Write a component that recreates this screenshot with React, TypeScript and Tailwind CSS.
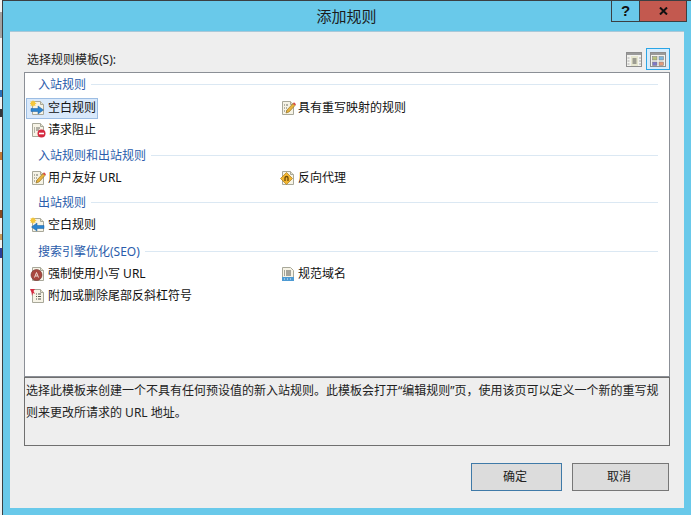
import type { ReactNode } from 'react';

function Page({ children }: { children?: ReactNode }) {
  return (
    <>
      <path d="M2.500 1.500h8l3 3v10h-11z" fill="#f6f3e6" stroke="#a8a89a" />
      <path d="M10.500 1.500v3h3" fill="#e4e0cc" stroke="#a8a89a" />
      {children}
    </>
  );
}

const star = 'M3 0l.8 1.600L5.500 1 5 2.700l1.700.8L5 4.300l.5 1.700-1.700-.6L3 7l-.8-1.600L.5 6 1 4.300-.7 3.500 1 2.700.5 1l1.700.6z';

function Icon({ name }: { name: string }) {
  return (
    <svg width="16" height="16" viewBox="0 0 16 16" className="shrink-0">
      {name === 'blankIn' && (
        <Page>
          <path d={star} fill="#f5c73a" />
          <path d="M1 8.500h7V6l5.500 4L8 14v-2.500H1z" fill="#2b84cf" stroke="#1d5f9f" strokeWidth="0.5" />
        </Page>
      )}
      {name === 'blankOut' && (
        <Page>
          <path d={star} fill="#f5c73a" />
          <path d="M14 8.500H7V6l-5.500 4L7 14v-2.500h7z" fill="#2b84cf" stroke="#1d5f9f" strokeWidth="0.5" />
        </Page>
      )}
      {name === 'block' && (
        <Page>
          <path d="M4 6h1M6 6h4M4 8h1M6 8h3M4 10h1" stroke="#6f6f66" />
          <circle cx="11.500" cy="11.500" r="4" fill="#d5293f" />
          <path d="M9 11.500h5" stroke="#fff" strokeWidth="1.600" />
        </Page>
      )}
      {name === 'edit' && (
        <Page>
          <path d="M4 5h1M4 8h1M4 11h1M6 5h2M6 8h1M6 11h2" stroke="#6f6f66" />
          <path d="M6 13l1-3 6-6.500 2 2-6 6.500z" fill="#e9b43c" stroke="#8a6a1e" strokeWidth="0.6" />
          <path d="M13 3.500l2 2 1-1.200-2-2z" fill="#d8433c" />
        </Page>
      )}
      {name === 'proxy' && (
        <Page>
          <path d="M6.500 2.500l6 6-6 6-6-6z" fill="#f2b632" stroke="#b07c14" strokeWidth="0.7" />
          <path d="M5 11V8a1.500 1.500 0 0 1 3 0v3" fill="none" stroke="#6d4a08" strokeWidth="1.300" />
        </Page>
      )}
      {name === 'lower' && (
        <Page>
          <circle cx="6.500" cy="9" r="5.500" fill="#a8473f" stroke="#6e2f2a" strokeWidth="0.6" />
          <path d="M4.500 11.500l2-5 2 5M5.500 10h2" fill="none" stroke="#efdcd4" />
        </Page>
      )}
      {name === 'domain' && (
        <>
          <path d="M2.500 1.500h8l3 3v10h-11z" fill="#f6f3e6" stroke="#a8a89a" />
          <path d="M4 5h1M6 5h5M4 7h1M6 7h5M4 9h1M6 9h5" stroke="#55554e" />
          <path d="M2 11h12v4H2z" fill="#4d9ad3" />
          <path d="M4 13h1M7 13h1M10 13h1" stroke="#dcefff" />
        </>
      )}
      {name === 'slash' && (
        <Page>
          <path d="M6 6h1M8 6h3M6 8.500h1M8 8.500h3M6 11h1M8 11h3" stroke="#55554e" />
          <path d="M0 1h5L3.500 3 5 6 3 5 2 8 1.500 4.500z" fill="#d5293f" />
        </Page>
      )}
    </svg>
  );
}

function Section({ title, className = '' }: { title: string; className?: string }) {
  return (
    <div className={`flex h-[24px] items-center pl-[13px] pr-[11px] ${className}`}>
      <span className="mr-[5px] shrink-0 pt-[2px] text-[12px] text-[#2a5cab]">{title}</span>
      <div className="h-[1px] flex-1 bg-[#dbe8f3]" />
    </div>
  );
}

function Rule({ icon, label, selected }: { icon: string; label: string; selected?: boolean }) {
  return (
    <div
      className={`flex h-[21px] w-fit items-center gap-[2px] border pl-[3px] pr-[1px] text-[12px] text-[#111] ${
        selected ? 'border-[#9cbde3] bg-[#d9e9fb]' : 'border-transparent'
      }`}
    >
      <Icon name={icon} />
      <span>{label}</span>
    </div>
  );
}

function RuleRow({ children }: { children: ReactNode }) {
  return <div className="grid h-[22px] grid-cols-[250px_1fr] items-center pl-[1px]">{children}</div>;
}

function ListIcon() {
  return (
    <svg width="16" height="15" viewBox="0 0 16 15">
      <rect x="0.500" y="0.500" width="15" height="14" fill="#f3f3ef" stroke="#8e8e8e" />
      <rect x="1" y="1" width="14" height="2" fill="#9a9a9a" />
      <rect x="5" y="4" width="7" height="10" fill="#e6e6cf" />
      <path d="M6.500 7h4M6.500 9h4M6.500 11h4" stroke="#555" />
      <path d="M1.500 6h2M1.500 9h2M1.500 12h2M13 6h2M13 9h2M13 12h2" stroke="#aaa" />
    </svg>
  );
}

function TilesIcon() {
  return (
    <svg width="16" height="15" viewBox="0 0 16 15">
      <rect x="0.500" y="0.500" width="15" height="14" fill="#f3f3ef" stroke="#8e8e8e" />
      <rect x="1" y="1" width="14" height="2" fill="#9a9a9a" />
      <rect x="2.500" y="4.500" width="4.500" height="3.500" fill="#b7c27c" stroke="#7b7b7b" strokeWidth="0.500" />
      <rect x="9" y="4.500" width="4.500" height="3.500" fill="#7db7de" stroke="#7b7b7b" strokeWidth="0.500" />
      <rect x="2.500" y="10" width="4.500" height="3.500" fill="#7f78c8" stroke="#7b7b7b" strokeWidth="0.500" />
      <rect x="9" y="10" width="4.500" height="3.500" fill="#e39a7c" stroke="#7b7b7b" strokeWidth="0.500" />
    </svg>
  );
}

export default function App() {
  return (
    <div className="flex h-[515px] w-[691px] overflow-hidden bg-[#69c9ea] font-['Noto_Sans','Noto_Sans_CJK_SC','Liberation_Sans',sans-serif]">
      <div className="flex w-[2px] shrink-0 flex-col bg-[#f2f2f2]">
        <div className="mt-[12px] h-[26px] bg-[#a3a3a3]" />
        <div className="mt-[52px] h-[7px] bg-[#2a6fb8]" />
        <div className="mt-[12px] h-[8px] bg-[#33363c]" />
        <div className="mt-[35px] h-[8px] bg-[#c47a36]" />
        <div className="mt-[50px] h-[8px] bg-[#8a4a20]" />
        <div className="mt-[16px] h-[6px] bg-[#c79a5a]" />
        <div className="mt-[8px] h-[10px] bg-[#2b3d9a]" />
      </div>
      <div className="flex min-w-0 flex-1 flex-col border-t border-l border-[#3b3f42]">
        <div className="relative flex h-[30px] shrink-0 items-center justify-center text-[15px] text-[#1c1c1c]">
          <span className="mr-[1px]">添加规则</span>
          <div className="absolute top-0 right-[4px] flex h-[21px] border border-t-0 border-[#3b3f42]">
            <div className="flex w-[28px] items-center justify-center border-r border-[#3b3f42] font-['Liberation_Sans',sans-serif] text-[15px] font-bold text-[#111]">
              ?
            </div>
            <div className="flex w-[46px] items-center justify-center bg-[#c3594f]">
              <svg width="9" height="8" viewBox="0 0 9 8">
                <path d="M1 0.500l7 7M8 0.500l-7 7" stroke="#111" strokeWidth="2" fill="none" />
              </svg>
            </div>
          </div>
        </div>
        <div className="mb-[7px] mr-[7px] ml-[7px] flex flex-1 flex-col border-t border-[#a9c8d8] bg-[#eeeeee] pr-[14px] pl-[14px]">
          <div className="flex h-[40px] shrink-0 items-end justify-between">
            <span className="mb-[3px] ml-[3px] text-[12px] text-[#222]">选择规则模板(S):</span>
            <div className="mb-[2px] flex items-center gap-[4px]">
              <ListIcon />
              <div className="flex h-[22px] w-[24px] items-center justify-center border border-[#2aa5e6] bg-[#d8ecfb]">
                <TilesIcon />
              </div>
            </div>
          </div>
          <div className="h-[305px] shrink-0 border border-[#8b8f96] bg-white">
            <Section title="入站规则" className="-mt-[1px] mb-[1px]" />
            <RuleRow>
              <Rule icon="blankIn" label="空白规则" selected />
              <Rule icon="edit" label="具有重写映射的规则" />
            </RuleRow>
            <RuleRow>
              <Rule icon="block" label="请求阻止" />
            </RuleRow>
            <Section title="入站规则和出站规则" className="mt-[2px]" />
            <RuleRow>
              <Rule icon="edit" label="用户友好 URL" />
              <Rule icon="proxy" label="反向代理" />
            </RuleRow>
            <Section title="出站规则" className="mt-[1px]" />
            <RuleRow>
              <Rule icon="blankOut" label="空白规则" />
            </RuleRow>
            <Section title="搜索引擎优化(SEO)" className="mt-[3px]" />
            <RuleRow>
              <Rule icon="lower" label="强制使用小写 URL" />
              <Rule icon="domain" label="规范域名" />
            </RuleRow>
            <RuleRow>
              <Rule icon="slash" label="附加或删除尾部反斜杠符号" />
            </RuleRow>
          </div>
          <div className="h-[69px] shrink-0 border border-[#6f6f6f] pt-[2px] pr-[8px] pl-[1px] text-[12px] leading-[22px] text-[#222]">
            选择此模板来创建一个不具有任何预设值的新入站规则。此模板会打开“编辑规则”页，使用该页可以定义一个新的重写规则来更改所请求的 URL 地址。
          </div>
          <div className="mt-[17px] flex justify-end gap-[10px] pr-[1px]">
            <button className="h-[28px] w-[91px] border border-[#3f7aa8] bg-[#dcdcdc] pr-[3px] text-[12px] text-[#222]">确定</button>
            <button className="h-[28px] w-[97px] border border-[#777] bg-[#dcdcdc] pr-[3px] text-[12px] text-[#222]">取消</button>
          </div>
        </div>
      </div>
    </div>
  );
}
